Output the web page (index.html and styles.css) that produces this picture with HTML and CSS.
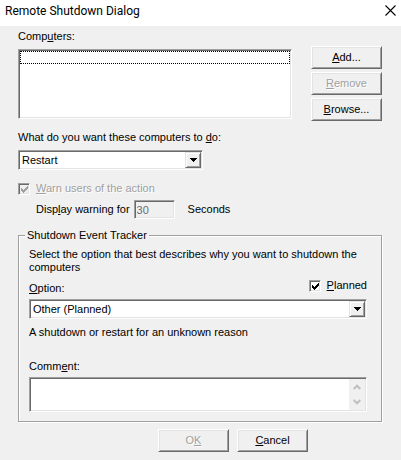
FILE: index.html
```html
<!DOCTYPE html>
<html lang="en">
<head>
<meta charset="utf-8">
<meta name="viewport" content="width=device-width, initial-scale=1">
<title>Remote Shutdown Dialog</title>
<link rel="stylesheet" href="styles.css">
</head>
<body>
<header class="titlebar">
  <h1>Remote Shutdown Dialog</h1>
  <button class="close" type="button" aria-label="Close">
    <svg width="11" height="11" viewBox="0 0 11 11"><path d="M.5.5l10 10M10.5.5l-10 10" fill="none" stroke="#000" stroke-width="1.1"/></svg>
  </button>
</header>
<form class="dialog">
  <div class="computers">
    <div class="list-column">
      <label for="computers">Comp<u>u</u>ters:</label>
      <div class="listbox sunken" id="computers" role="listbox" tabindex="0" aria-label="Computers"><div class="focus-row"></div></div>
    </div>
    <div class="button-column">
      <button class="button" type="button"><span><u>A</u>dd...</span></button>
      <button class="button" type="button" disabled><span><u>R</u>emove</span></button>
      <button class="button" type="button"><span><u>B</u>rowse...</span></button>
    </div>
  </div>

  <div class="action">
    <label for="action">What do you want these computers to <u>d</u>o:</label>
    <div class="combo combo-action">
      <select class="sunken" id="action"><option>Restart</option></select>
      <span class="arrow"><svg width="7" height="4" viewBox="0 0 7 4" shape-rendering="crispEdges"><path d="M0 0h7v1H6v1H5v1H4v1H3V3H2V2H1V1H0z"/></svg></span>
    </div>
  </div>

  <label class="check warn"><span class="tick"><input class="sunken" type="checkbox" checked disabled><svg width="7" height="7" viewBox="0 0 7 7" shape-rendering="crispEdges"><path d="M0 2h1v1h1v1h1V3h1V2h1V1h1V0h1v3H6v1H5v1H4v1H3v1H2V6H1V5H0z"/></svg></span><span class="muted"><u>W</u>arn users of the action</span></label>

  <div class="delay">
    <label for="delay">Disp<u>l</u>ay warning for</label>
    <input class="sunken" id="delay" type="text" value="30" disabled>
    <span>Seconds</span>
  </div>

  <fieldset>
    <legend>Shutdown Event Tracker</legend>
    <p>Select the option that best describes why you want to shutdown the computers</p>
    <div class="option-row">
      <label for="option"><u>O</u>ption:</label>
      <label class="check"><span class="tick"><input class="sunken" type="checkbox" checked><svg width="7" height="7" viewBox="0 0 7 7" shape-rendering="crispEdges"><path d="M0 2h1v1h1v1h1V3h1V2h1V1h1V0h1v3H6v1H5v1H4v1H3v1H2V6H1V5H0z"/></svg></span><span><u>P</u>lanned</span></label>
    </div>
    <div class="combo">
      <select class="sunken" id="option"><option>Other (Planned)</option></select>
      <span class="arrow"><svg width="7" height="4" viewBox="0 0 7 4" shape-rendering="crispEdges"><path d="M0 0h7v1H6v1H5v1H4v1H3V3H2V2H1V1H0z"/></svg></span>
    </div>
    <p class="description">A shutdown or restart for an unknown reason</p>
    <label class="comment-label" for="comment">Comm<u>e</u>nt:</label>
    <div class="comment">
      <textarea class="sunken" id="comment"></textarea>
      <span class="scroll">
        <svg width="8" height="6" viewBox="0 0 8 6"><path d="M.7 5L4 1.700 7.300 5" fill="none" stroke="#bfbfbf" stroke-width="2"/></svg>
        <svg width="8" height="6" viewBox="0 0 8 6"><path d="M.7 1L4 4.300 7.300 1" fill="none" stroke="#bfbfbf" stroke-width="2"/></svg>
      </span>
    </div>
  </fieldset>

  <div class="footer">
    <button class="button" type="submit" disabled><span>O<u>K</u></span></button>
    <button class="button" type="button"><span><u>C</u>ancel</span></button>
  </div>
</form>
</body>
</html>
```
FILE: styles.css
```css
* {
  box-sizing: border-box;
}

body {
  margin: 0;
  min-height: 100vh;
  background: #f0f0f0;
  color: #000;
  font: 11px/13px "Liberation Sans", Arial, sans-serif;
}

button,
input,
select,
textarea {
  margin: 0;
  border-radius: 0;
  color: inherit;
  font: inherit;
}

svg {
  display: block;
}

u {
  text-underline-offset: 1px;
  text-decoration-thickness: 1px;
  text-decoration-skip-ink: none;
}

.titlebar {
  display: flex;
  align-items: center;
  justify-content: space-between;
  height: 26px;
  padding: 0 5px 5px 5px;
  background: #fff;
}

h1 {
  margin: 0;
  font: 12px/16px Roboto, "Open Sans", sans-serif;
}

.close {
  padding: 0;
  border: 0;
  background: none;
}

.dialog {
  padding: 4px 19px 8px 18px;
}

.sunken {
  appearance: none;
  border: 1px solid;
  border-color: #a0a0a0 #fff #fff #a0a0a0;
  outline: 0;
  background: #fff;
  box-shadow: inset 1px 1px #696969, inset -1px -1px #e3e3e3;
}

.computers {
  display: flex;
  gap: 19px;
}

.list-column {
  flex: 1;
  display: flex;
  flex-direction: column;
  gap: 6px;
}

.listbox {
  height: 70px;
  padding: 1px;
}

.focus-row {
  height: 13px;
  border: 1px dotted #000;
}

.button-column {
  display: flex;
  flex-direction: column;
  gap: 3px;
  padding-top: 16px;
}

.button {
  width: 71px;
  height: 23px;
  padding: 0;
  border: 1px solid;
  border-color: #fff #696969 #696969 #fff;
  background: #f0f0f0;
  box-shadow: inset 1px 1px #e3e3e3, inset -1px -1px #a0a0a0;
}

.button:disabled,
.muted {
  color: #a0a0a0;
  text-shadow: 1px 1px #fff;
}

.action {
  display: flex;
  flex-direction: column;
  gap: 6px;
  margin-top: 10px;
}

.combo {
  position: relative;
}

.combo-action {
  width: 185px;
}

.combo select {
  display: block;
  width: 100%;
  height: 20px;
  padding: 0 20px 0 3px;
}

.arrow {
  position: absolute;
  top: 2px;
  right: 2px;
  bottom: 2px;
  display: grid;
  place-items: center;
  width: 16px;
  border: 1px solid;
  border-color: #e3e3e3 #696969 #696969 #e3e3e3;
  background: #f0f0f0;
  box-shadow: inset 1px 1px #fff, inset -1px -1px #a0a0a0;
  pointer-events: none;
}

.check {
  display: flex;
  align-items: center;
  gap: 6px;
}

.warn {
  margin-top: 12px;
}

.tick {
  position: relative;
}

.tick input {
  display: block;
  width: 12px;
  height: 12px;
}

.tick svg {
  position: absolute;
  top: 3px;
  left: 3px;
  visibility: hidden;
  pointer-events: none;
}

.tick input:checked + svg {
  visibility: visible;
}

.tick input:disabled {
  background: #f0f0f0;
}

.tick input:disabled + svg {
  fill: #a0a0a0;
}

.delay {
  display: flex;
  align-items: center;
  margin: 5px 0 10px 18px;
}

.delay input {
  width: 41px;
  height: 19px;
  margin: 0 13px 0 4px;
  padding: 0 2px;
  background: #f0f0f0;
  color: #6d6d6d;
}

fieldset {
  min-width: 0;
  margin: 0;
  padding: 6px 14px 9px 10px;
  border: 1px solid #a0a0a0;
  box-shadow: 1px 1px #fff, inset 1px 1px #fff;
}

legend {
  margin-left: -4px;
  padding: 0 2px;
  background: #f0f0f0;
}

p {
  margin: 0;
}

.option-row {
  display: flex;
  justify-content: space-between;
  align-items: flex-end;
  margin: 5px 0 4px;
}

.option-row .check {
  padding-bottom: 3px;
}

.description {
  margin-top: 7px;
}

.comment-label {
  display: block;
  margin: 21px 0 4px;
}

.comment {
  position: relative;
}

.comment textarea {
  display: block;
  width: 100%;
  height: 35px;
  padding: 2px 20px 2px 3px;
  resize: none;
}

.scroll {
  position: absolute;
  top: 2px;
  right: 2px;
  bottom: 2px;
  display: flex;
  flex-direction: column;
  align-items: center;
  justify-content: space-around;
  width: 16px;
  background: #f0f0f0;
}

.footer {
  display: flex;
  justify-content: center;
  gap: 8px;
  margin: 7px 0 0 66px;
}
```
